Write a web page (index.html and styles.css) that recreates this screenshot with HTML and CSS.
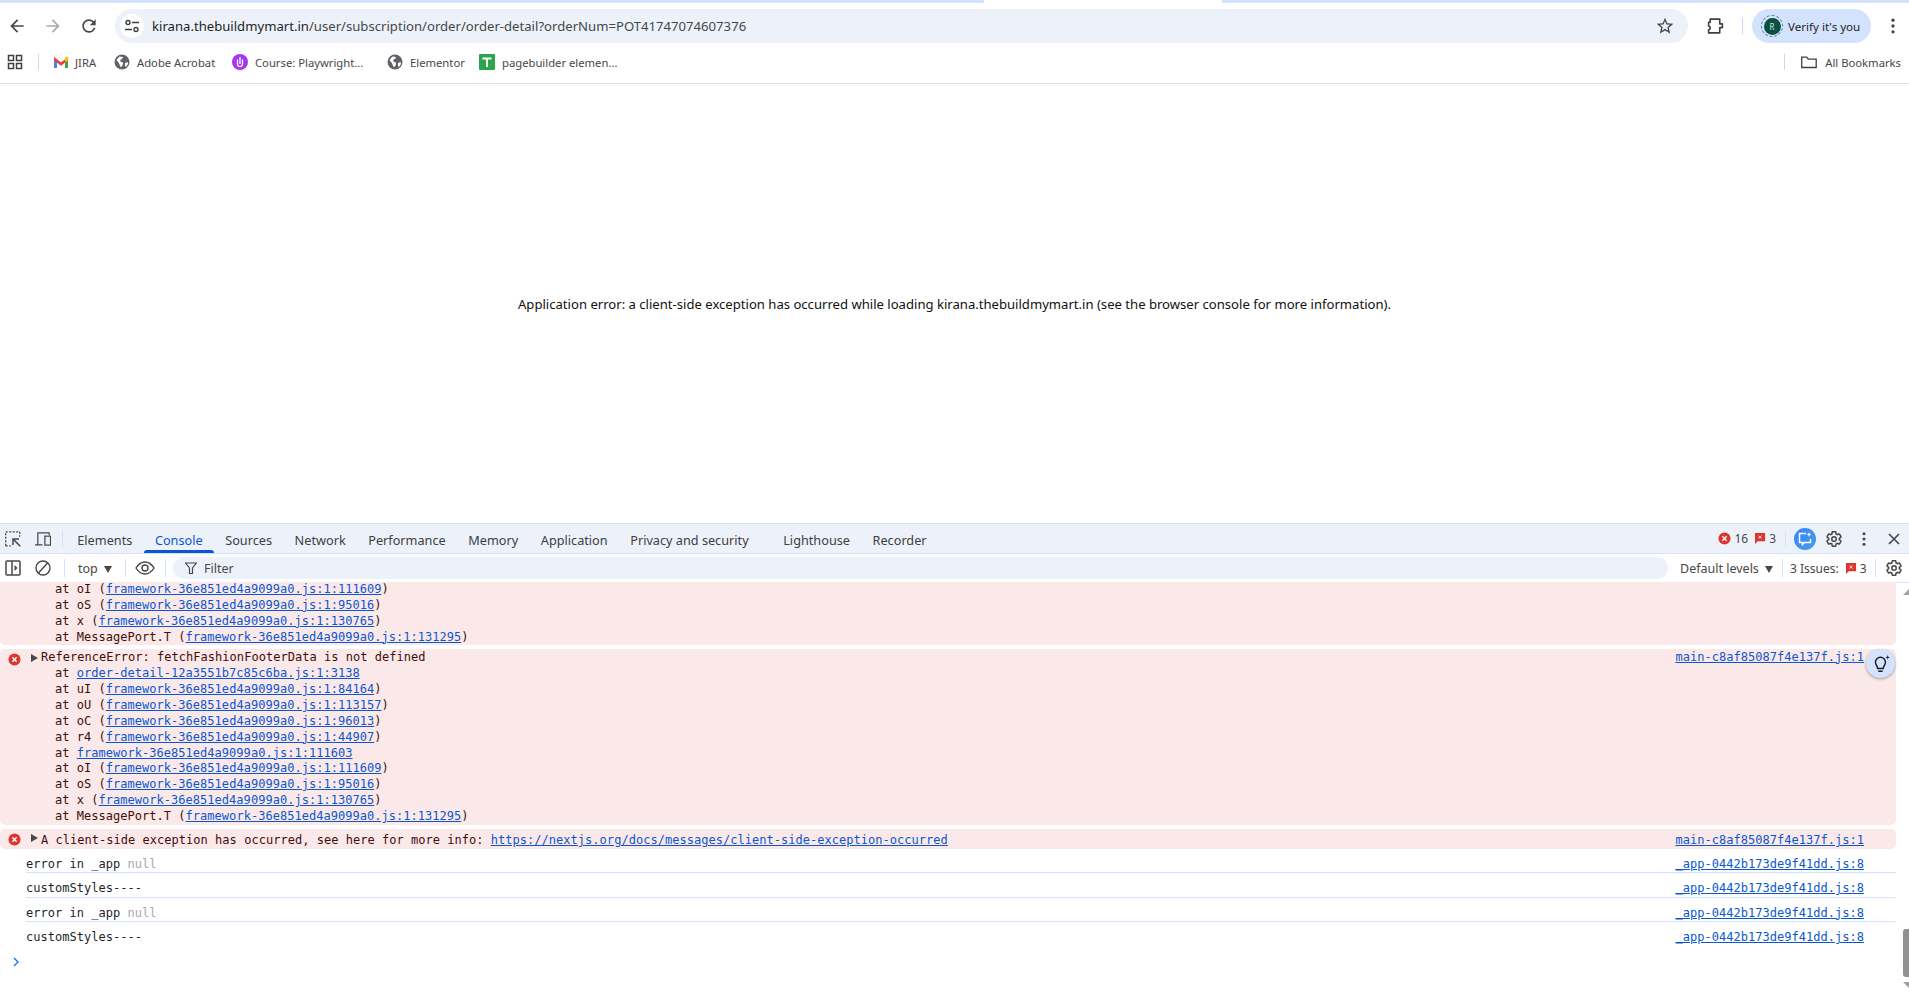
FILE: index.html
```html
<!DOCTYPE html>
<html lang="en">
<head>
    <meta charset="UTF-8">
    <title>kirana.thebuildmymart.in</title>
    <link rel="stylesheet" href="styles.css">
</head>
<body>
<svg class="defs" width="0" height="0">
    <symbol id="i_gear" viewBox="0 0 24 24"><path fill="none" stroke="currentColor" stroke-width="2" d="M19.14 12.94c.04-.3.06-.61.06-.94 0-.32-.02-.64-.07-.94l2.03-1.58c.18-.14.23-.41.12-.61l-1.92-3.32c-.12-.22-.37-.29-.59-.22l-2.39.96c-.5-.38-1.03-.7-1.62-.94l-.36-2.54c-.04-.24-.24-.41-.48-.41h-3.84c-.24 0-.43.17-.47.41l-.36 2.54c-.59.24-1.13.57-1.62.94l-2.39-.96c-.22-.08-.47 0-.59.22L2.74 8.87c-.12.21-.08.47.12.61l2.03 1.58c-.05.3-.09.63-.09.94s.02.64.07.94l-2.03 1.58c-.18.14-.23.41-.12.61l1.92 3.32c.12.22.37.29.59.22l2.39-.96c.5.38 1.03.7 1.62.94l.36 2.54c.05.24.24.41.48.41h3.84c.24 0 .44-.17.47-.41l.36-2.54c.59-.24 1.13-.56 1.62-.94l2.39.96c.22.08.47 0 .59-.22l1.92-3.32c.12-.22.07-.47-.12-.61l-2.01-1.58z"/><circle cx="12" cy="12" r="3" fill="none" stroke="currentColor" stroke-width="2"/></symbol>
    <symbol id="i_kebab" viewBox="0 0 24 24"><circle cx="12" cy="5" r="2" fill="currentColor"/><circle cx="12" cy="12" r="2" fill="currentColor"/><circle cx="12" cy="19" r="2" fill="currentColor"/></symbol>
    <symbol id="i_globe" viewBox="0 0 16 16"><circle cx="8" cy="8" r="7.5" fill="#5f6368"/><path fill="#fff" d="M2.500 6l3-3.500 3.500.5-1 2-2 1 1 2 2 .5v2l-2 3-1.500-3-1-2zM11 9l2.500-1 .5 2-2 3-1-1z"/></symbol>
    <symbol id="i_err" viewBox="0 0 14 14"><circle cx="7" cy="7" r="6.500" fill="#dc362e"/><path d="M4.700 4.700l4.600 4.600M9.300 4.700l-4.600 4.600" stroke="#fff" stroke-width="1.500"/></symbol>
    <symbol id="i_flag" viewBox="0 0 12 12"><path fill="#dc362e" d="M0 0h11v9H3l-3 3z"/><path d="M4 3l3 3M7 3L4 6" stroke="#fff"/></symbol>
</svg>

<div class="strip">
    <div class="strip_tab"></div>
</div>

<div class="toolbar">
    <svg class="ic nav_back" viewBox="0 0 24 24"><path d="M20 11H7.830l5.590-5.590L12 4l-8 8 8 8 1.410-1.410L7.830 13H20v-2z"/></svg>
    <svg class="ic nav_fwd" viewBox="0 0 24 24"><path d="M4 11h12.170l-5.590-5.590L12 4l8 8-8 8-1.410-1.410L16.170 13H4v-2z"/></svg>
    <svg class="ic nav_reload" viewBox="0 0 24 24"><path d="M17.650 6.350A7.958 7.958 0 0012 4c-4.420 0-7.990 3.580-7.990 8s3.570 8 7.990 8c3.730 0 6.840-2.550 7.730-6h-2.080A5.990 5.990 0 0112 18c-3.310 0-6-2.690-6-6s2.690-6 6-6c1.660 0 3.140.690 4.220 1.780L13 11h7V4l-2.350 2.350z"/></svg>
    <div class="omnibox">
        <span class="tune">
            <svg width="16" height="16" viewBox="0 0 16 16" fill="none" stroke="#3c4043" stroke-width="1.400"><circle cx="4" cy="4.500" r="2"/><path d="M8 4.500h7M1 11.500h7"/><circle cx="12" cy="11.500" r="2"/></svg>
        </span>
        <span class="url"><b>kirana.thebuildmymart.in</b>/user/subscription/order/order-detail?orderNum=POT41747074607376</span>
        <svg class="ic_star" viewBox="0 0 24 24"><path d="M22 9.240l-7.190-.620L12 2 9.190 8.630 2 9.240l5.460 4.730L5.820 21 12 17.270 18.180 21l-1.630-7.030L22 9.240zM12 15.400l-3.760 2.270 1-4.280-3.320-2.880 4.380-.380L12 6.100l1.710 4.040 4.380.380-3.320 2.880 1 4.280L12 15.400z"/></svg>
    </div>
    <svg class="ic_ext" viewBox="0 0 16 15" fill="none" stroke="#3c4043" stroke-width="1.500"><path d="M3 1h9v4.500h2.500V9H12v5H1.500v-3c2 0 2-3.500 0-3.500V4H3z" stroke-linejoin="round"/></svg>
    <span class="tb_sep"></span>
    <div class="verify">
        <span class="avatar_ring"><span class="avatar">R</span></span>
        <span>Verify it's you</span>
    </div>
    <svg class="ic_menu"><use href="#i_kebab"/></svg>
</div>

<div class="bookmarks">
    <svg class="bm_apps" viewBox="0 0 16 16" fill="none" stroke="#3c4043" stroke-width="1.500"><rect x="1.500" y="1.500" width="5" height="5"/><rect x="9.500" y="1.500" width="5" height="5"/><rect x="1.500" y="9.500" width="5" height="5"/><rect x="9.500" y="9.500" width="5" height="5"/></svg>
    <span class="bm_sep"></span>
    <div class="bm bm_jira">
        <svg width="14" height="12" viewBox="0 0 14 12"><path fill="#4285f4" d="M0 1.500V12h3V5z"/><path fill="#34a853" d="M14 1.500V12h-3V5z"/><path fill="#ea4335" d="M0 1l7 5.200L14 1v3.500L7 9.700 0 4.500z"/><path fill="#fbbc04" d="M11 1.500l3-1v4l-3 1.800z"/></svg>
        <span>JIRA</span>
    </div>
    <div class="bm bm_adobe"><svg class="bm_globe"><use href="#i_globe"/></svg><span>Adobe Acrobat</span></div>
    <div class="bm bm_course">
        <svg width="16" height="16" viewBox="0 0 16 16"><circle cx="8" cy="8" r="8" fill="#a435f0"/><path d="M5.500 5.500v4.500a2.500 2.500 0 005 0V5.500M8 3v7" fill="none" stroke="#fff" stroke-width="1.300"/></svg>
        <span>Course: Playwright...</span>
    </div>
    <div class="bm bm_elem"><svg class="bm_globe"><use href="#i_globe"/></svg><span>Elementor</span></div>
    <div class="bm bm_page">
        <svg width="16" height="16" viewBox="0 0 16 16"><rect width="16" height="16" rx="1" fill="#2da44e"/><path d="M3.500 4.500h9M8 4.500V13" stroke="#fff" stroke-width="2"/></svg>
        <span>pagebuilder elemen...</span>
    </div>
    <span class="bm_sep bm_sep_right"></span>
    <div class="bm bm_all">
        <svg width="16" height="13" viewBox="0 0 16 13" fill="none" stroke="#3c4043" stroke-width="1.300"><path d="M.700 11.500V1.200h5l1.500 2h8v8.300z"/></svg>
        <span>All Bookmarks</span>
    </div>
</div>

<div class="page">
    <p class="page_error">Application error: a client-side exception has occurred while loading kirana.thebuildmymart.in (see the browser console for more information).</p>
</div>

<div class="devtools">
    <div class="dt_tabs">
        <svg class="dt_ic dt_inspect" viewBox="0 0 16 16" fill="none" stroke="#474747" stroke-width="1.300"><path d="M.700 14.800v-14h14v5" stroke-dasharray="2 1.500"/><path d="M.700 14.800h5" stroke-dasharray="2 1.500"/><path d="M8 14V8h6M8 8l7.300 7.300" stroke-width="1.500"/></svg>
        <svg class="dt_ic dt_device" viewBox="0 0 17 15" fill="none" stroke="#474747" stroke-width="1.300"><path d="M3 13.500V1h12v2.500M0 13.800h8"/><rect x="10.500" y="4.500" width="6" height="9.500"/></svg>
        <span class="dt_sep"></span>
        <span class="tab">Elements</span>
        <span class="tab tab_active">Console</span>
        <span class="tab">Sources</span>
        <span class="tab">Network</span>
        <span class="tab">Performance</span>
        <span class="tab">Memory</span>
        <span class="tab">Application</span>
        <span class="tab">Privacy and security</span>
        <span class="tab tab_wide">Lighthouse</span>
        <span class="tab">Recorder</span>
        <div class="dt_right">
            <svg class="i_err"><use href="#i_err"/></svg>
            <span class="count">16</span>
            <svg class="i_flag"><use href="#i_flag"/></svg>
            <span class="count">3</span>
            <span class="dt_sep dt_sep_r"></span>
            <span class="ai_btn">
                <svg width="14" height="14" viewBox="0 0 14 14" fill="none" stroke="#fff" stroke-width="1.500"><path d="M8 1.500H1.500v9h3v2l2-2h6V7"/><path d="M11 0l.7 1.800L13.500 2.500l-1.800.7L11 5l-.7-1.800-1.800-.7 1.800-.7z" fill="#fff" stroke="none"/></svg>
            </span>
            <svg class="dt_gear"><use href="#i_gear"/></svg>
            <svg class="dt_kebab"><use href="#i_kebab"/></svg>
            <svg class="dt_close" viewBox="0 0 14 14" stroke="#474747" stroke-width="1.600"><path d="M2 2l10 10M12 2L2 12"/></svg>
        </div>
    </div>

    <div class="dt_bar">
        <svg class="dt_ic dt_panel" viewBox="0 0 16 16" fill="none" stroke="#474747" stroke-width="1.500"><rect x="1" y="1" width="14" height="14" rx="1"/><path d="M7 1v14"/><path d="M9.500 5l3 3-3 3z" fill="#474747" stroke="none"/></svg>
        <svg class="dt_ic dt_clear" viewBox="0 0 16 16" fill="none" stroke="#474747" stroke-width="1.400"><circle cx="8" cy="8" r="7"/><path d="M3.500 13L12.500 3"/></svg>
        <span class="dt_sep"></span>
        <span class="ctx">top <i class="tri"></i></span>
        <span class="dt_sep"></span>
        <svg class="dt_eye" viewBox="0 0 20 14" fill="none" stroke="#474747" stroke-width="1.400"><path d="M1 7c2.500-4 5.500-6 9-6s6.500 2 9 6c-2.500 4-5.500 6-9 6S3.500 11 1 7z"/><circle cx="10" cy="7" r="3"/></svg>
        <span class="dt_sep"></span>
        <div class="filter">
            <svg width="12" height="12" viewBox="0 0 12 12" fill="none" stroke="#474747" stroke-width="1.200"><path d="M.5 1h11L7.500 6v5.500h-3V6z"/></svg>
            <span>Filter</span>
        </div>
        <span class="levels">Default levels <i class="tri"></i></span>
        <span class="dt_sep"></span>
        <span class="issues">3 Issues:</span>
        <svg class="i_flag"><use href="#i_flag"/></svg>
        <span class="count">3</span>
        <span class="dt_sep dt_sep_i"></span>
        <svg class="dt_gear"><use href="#i_gear"/></svg>
    </div>

    <div class="console">
        <div class="msgs">
            <div class="msg_err msg_cut">
<div class="line">at oI (<a>framework-36e851ed4a9099a0.js:1:111609</a>)</div>
<div class="line">at oS (<a>framework-36e851ed4a9099a0.js:1:95016</a>)</div>
<div class="line">at x (<a>framework-36e851ed4a9099a0.js:1:130765</a>)</div>
<div class="line">at MessagePort.T (<a>framework-36e851ed4a9099a0.js:1:131295</a>)</div>
            </div>
            <div class="msg_err msg_block">
                <svg class="msg_icon"><use href="#i_err"/></svg>
                <div class="head"><i class="arrow"></i><span>ReferenceError: fetchFashionFooterData is not defined</span><a class="src">main-c8af85087f4e137f.js:1</a></div>
<div class="line">at <a>order-detail-12a3551b7c85c6ba.js:1:3138</a></div>
<div class="line">at uI (<a>framework-36e851ed4a9099a0.js:1:84164</a>)</div>
<div class="line">at oU (<a>framework-36e851ed4a9099a0.js:1:113157</a>)</div>
<div class="line">at oC (<a>framework-36e851ed4a9099a0.js:1:96013</a>)</div>
<div class="line">at r4 (<a>framework-36e851ed4a9099a0.js:1:44907</a>)</div>
<div class="line">at <a>framework-36e851ed4a9099a0.js:1:111603</a></div>
<div class="line">at oI (<a>framework-36e851ed4a9099a0.js:1:111609</a>)</div>
<div class="line">at oS (<a>framework-36e851ed4a9099a0.js:1:95016</a>)</div>
<div class="line">at x (<a>framework-36e851ed4a9099a0.js:1:130765</a>)</div>
<div class="line">at MessagePort.T (<a>framework-36e851ed4a9099a0.js:1:131295</a>)</div>
            </div>
            <div class="msg_err msg_one">
                <svg class="msg_icon"><use href="#i_err"/></svg>
                <div class="head"><i class="arrow"></i><span>A client-side exception has occurred, see here for more info: <a>https://nextjs.org/docs/messages/client-side-exception-occurred</a></span><a class="src">main-c8af85087f4e137f.js:1</a></div>
            </div>
            <div class="log"><span>error in _app <em>null</em></span><a class="src">_app-0442b173de9f41dd.js:8</a></div>
            <div class="log"><span>customStyles----</span><a class="src">_app-0442b173de9f41dd.js:8</a></div>
            <div class="log"><span>error in _app <em>null</em></span><a class="src">_app-0442b173de9f41dd.js:8</a></div>
            <div class="log log_last"><span>customStyles----</span><a class="src">_app-0442b173de9f41dd.js:8</a></div>
            <svg class="prompt" viewBox="0 0 8 10" fill="none" stroke="#1a73e8" stroke-width="1.400"><path d="M2 1l4 4-4 4"/></svg>
            <span class="bulb">
                <svg width="20" height="20" viewBox="0 0 18 18" fill="none" stroke="#1f1f1f" stroke-width="1.300"><path d="M6 13c0-2-2-3-2-5.500a4.500 4.500 0 019 0C13 10 11 11 11 13zM6.500 15.500h4"/><path d="M15 1l.5 1.500L17 3l-1.500.5L15 5l-.5-1.500L13 3l1.500-.5z" fill="#1f1f1f" stroke="none"/></svg>
            </span>
        </div>
        <div class="scrollbar">
            <i class="sb_up"></i>
            <i class="sb_thumb"></i>
            <i class="sb_down"></i>
        </div>
    </div>
</div>
</body>
</html>
```

FILE: styles.css
```css
* {
    box-sizing: border-box;
}

html, body {
    margin: 0;
    height: 100%;
    overflow: hidden;
}

body {
    display: flex;
    flex-direction: column;
    background: #fff;
    font-family: "Noto Sans", "Open Sans", sans-serif;
    color: #1f1f1f;
}

.defs {
    position: absolute;
}

/* browser chrome */
.strip {
    height: 3px;
    flex: none;
    background: #d3e3fd;
    padding-left: 984px;
}

.strip_tab {
    width: 238px;
    height: 3px;
    background: #fff;
}

.toolbar {
    height: 46px;
    flex: none;
    display: flex;
    align-items: center;
}

.ic {
    width: 20px;
    height: 20px;
    fill: #474747;
    flex: none;
}

.nav_back {
    margin-left: 7px;
}

.nav_fwd {
    margin-left: 16px;
    fill: #a8abaf;
}

.nav_reload {
    margin-left: 16px;
}

.omnibox {
    width: 1573px;
    height: 34px;
    margin-left: 16px;
    background: #edf2fa;
    border-radius: 17px;
    display: flex;
    align-items: center;
    padding-left: 5px;
    padding-right: 13px;
}

.tune {
    width: 24px;
    height: 24px;
    border-radius: 50%;
    background: #fff;
    display: flex;
    align-items: center;
    justify-content: center;
}

.url {
    margin-left: 8px;
    flex: 1;
    font-size: 13.130px;
    color: #474747;
    white-space: nowrap;
}

.url b {
    font-weight: normal;
    color: #1f1f1f;
}

.ic_star {
    width: 20px;
    height: 20px;
    fill: #474747;
}

.ic_ext {
    width: 17px;
    height: 16px;
    margin-left: 19px;
    margin-right: 1px;
    flex: none;
}

.tb_sep {
    width: 1px;
    height: 16px;
    margin-left: 17px;
    background: #c7d7f5;
    flex: none;
}

.verify {
    width: 119px;
    height: 34px;
    margin-left: 9px;
    border-radius: 17px;
    background: #d3e3fd;
    display: flex;
    align-items: center;
    padding-left: 9px;
    font-size: 11.600px;
    flex: none;
}

.avatar_ring {
    width: 22px;
    height: 22px;
    border: 1px dashed #5a7fb8;
    border-radius: 50%;
    display: flex;
    align-items: center;
    justify-content: center;
    margin-right: 5px;
}

.avatar {
    width: 17px;
    height: 17px;
    border-radius: 50%;
    background: #0b4f3c;
    color: #d3e3fd;
    font-size: 8px;
    text-align: center;
    line-height: 17px;
}

.ic_menu {
    width: 20px;
    height: 20px;
    margin-left: 12px;
    color: #474747;
    flex: none;
}

.bookmarks {
    height: 35px;
    flex: none;
    display: flex;
    align-items: center;
    padding-bottom: 8px;
    font-size: 11.250px;
    color: #474747;
    border-bottom: 1px solid #e0e0e0;
}

.bm_apps {
    width: 16px;
    height: 16px;
    margin-left: 7px;
    flex: none;
}

.bm_sep {
    width: 1px;
    height: 16px;
    margin-left: 15px;
    background: #c7d7f5;
    flex: none;
}

.bm {
    display: flex;
    align-items: center;
    gap: 7px;
    white-space: nowrap;
}

.bm_globe {
    width: 16px;
    height: 16px;
}

.bm_jira {
    margin-left: 15px;
    width: 60px;
}

.bm_adobe {
    width: 118px;
}

.bm_course {
    width: 155px;
}

.bm_elem {
    width: 92px;
}

.bm_sep_right {
    margin-left: auto;
}

.bm_all {
    margin-left: 16px;
    margin-right: 8px;
    gap: 8px;
}

.page {
    flex: 1;
    display: flex;
    align-items: center;
    justify-content: center;
}

.page_error {
    margin: 0;
    font-size: 13.100px;
    color: #111;
}

/* devtools */
.devtools {
    height: 471px;
    flex: none;
    display: flex;
    flex-direction: column;
    font-size: 12.500px;
    color: #474747;
}

.dt_tabs {
    height: 31px;
    flex: none;
    display: flex;
    align-items: center;
    background: #edf2fa;
    border-top: 1px solid #d3e3fd;
    border-bottom: 1px solid #d3e3fd;
}

.dt_bar {
    height: 29px;
    flex: none;
    display: flex;
    align-items: center;
    border-bottom: 1px solid #d3e3fd;
}

.dt_ic {
    width: 16px;
    height: 16px;
    flex: none;
}

.dt_inspect {
    margin-left: 5px;
}

.dt_device {
    margin-left: 14px;
}

.dt_sep {
    width: 1px;
    height: 18px;
    background: #d3e3fd;
    flex: none;
}

.dt_tabs > .dt_sep {
    margin-left: 11px;
    margin-right: 3px;
}

.tab {
    height: 29px;
    line-height: 32px;
    padding: 0 11.300px;
    white-space: nowrap;
    font-size: 12.700px;
    color: #3c4043;
}

.tab_active {
    color: #0b57d0;
    position: relative;
}

.tab_active::after {
    content: "";
    position: absolute;
    left: 0;
    right: 0;
    bottom: 0;
    height: 3px;
    border-radius: 3px 3px 0 0;
    background: #0b57d0;
}

.tab_wide {
    margin-left: 12px;
}

.dt_right {
    margin-left: auto;
    display: flex;
    align-items: center;
}

.i_err {
    width: 13px;
    height: 13px;
}

.i_flag {
    width: 11px;
    height: 11px;
    flex: none;
}

.count {
    margin-left: 3px;
    margin-right: 7px;
    font-size: 12px;
}

.dt_sep_r {
    margin-left: 2px;
    margin-right: 8px;
    height: 16px;
}

.ai_btn {
    width: 22px;
    height: 22px;
    border-radius: 50%;
    background: linear-gradient(135deg, #3186ff, #4a9be8);
    display: flex;
    align-items: center;
    justify-content: center;
}

.dt_gear {
    width: 18px;
    height: 18px;
    margin-left: 9px;
    color: #474747;
    flex: none;
}

.dt_kebab {
    width: 18px;
    height: 18px;
    margin-left: 12px;
    color: #474747;
}

.dt_close {
    width: 14px;
    height: 14px;
    margin-left: 14px;
    margin-right: 8px;
}

.dt_panel {
    margin-left: 5px;
}

.dt_clear {
    margin-left: 14px;
}

.dt_bar > .dt_sep {
    margin-left: 13px;
}

.ctx {
    width: 34px;
    margin-left: 13px;
    white-space: nowrap;
}

.tri {
    display: inline-block;
    width: 0;
    height: 0;
    margin-left: 3px;
    border-left: 4px solid transparent;
    border-right: 4px solid transparent;
    border-top: 7px solid #474747;
}

.dt_eye {
    width: 20px;
    height: 14px;
    margin-left: 9px;
    flex: none;
}

.dt_bar > .dt_eye + .dt_sep {
    margin-left: 10px;
}

.filter {
    margin-left: 7px;
    width: 1495px;
    height: 22px;
    background: #edf2fa;
    border-radius: 11px;
    display: flex;
    align-items: center;
    gap: 7px;
    padding-left: 12px;
}

.levels {
    margin-left: 12px;
    width: 89px;
    white-space: nowrap;
}

.dt_bar > .levels + .dt_sep {
    margin-left: 13px;
}

.issues {
    margin-left: 7px;
    margin-right: 7px;
    font-size: 12px;
    white-space: nowrap;
}

.dt_bar > .dt_sep_i {
    margin-left: 1px;
}

.console {
    flex: 1;
    display: flex;
    min-height: 0;
    font-family: "DejaVu Sans Mono", "Liberation Mono", monospace;
    font-size: 12px;
    letter-spacing: .03px;
    color: #1f1f1f;
}

.msgs {
    flex: 1;
    min-width: 0;
    position: relative;
}

.msg_err {
    position: relative;
    background: #fbe9e9;
    border-radius: 0 0 5px 5px;
    color: #410e0b;
    margin-bottom: 4px;
}

.msg_block, .msg_one {
    border-radius: 5px;
}

.msg_cut {
    height: 63px;
    padding-top: 0;
    border-radius: 0 0 5px 5px;
}

.msg_cut .line:first-child {
    margin-top: -1px;
}

.msg_block {
    height: 176px;
    padding-top: .5px;
}

.msg_block .head {
    margin-bottom: 1px;
}

.msg_one {
    height: 20px;
    margin-bottom: 0;
    padding-top: 4px;
}

.line {
    height: 15.850px;
    line-height: 15.850px;
    padding-left: 55px;
    white-space: pre;
}

.head {
    height: 15.800px;
    line-height: 15.800px;
    display: flex;
    padding-left: 41px;
    padding-right: 32px;
    white-space: pre;
}

.msg_icon {
    position: absolute;
    left: 8px;
    top: 4px;
    width: 13px;
    height: 13px;
}

.arrow {
    position: absolute;
    left: 31px;
    top: 5px;
    width: 0;
    height: 0;
    border-top: 4px solid transparent;
    border-bottom: 4px solid transparent;
    border-left: 7px solid #474747;
}

a {
    color: #0b57d0;
    text-decoration: underline;
}

.src {
    margin-left: auto;
}

.log {
    height: 24.400px;
    margin-left: 26px;
    padding-right: 32px;
    padding-top: 7px;
    line-height: 16px;
    display: flex;
    white-space: pre;
    border-bottom: 1px solid #d3e3fd;
}

.log_last {
    border-bottom: none;
}

.log em {
    font-style: normal;
    color: #a8a8a8;
}

.prompt {
    display: block;
    width: 8px;
    height: 10px;
    margin-left: 12px;
    margin-top: 10px;
}

.bulb {
    position: absolute;
    right: 1px;
    top: 66px;
    width: 29px;
    height: 29px;
    border-radius: 50%;
    background: #d3e3fd;
    box-shadow: 0 1px 3px rgba(0, 0, 0, .35);
    display: flex;
    align-items: center;
    justify-content: center;
}

.scrollbar {
    width: 13px;
    flex: none;
    display: flex;
    flex-direction: column;
    align-items: flex-end;
    padding-top: 6px;
}

.sb_up {
    width: 0;
    height: 0;
    border-left: 6px solid transparent;
    border-bottom: 6px solid #a0a0a0;
}

.sb_thumb {
    width: 6px;
    height: 48px;
    margin-top: auto;
    background: #909090;
    border-radius: 3px 0 0 3px;
}

.sb_down {
    width: 0;
    height: 0;
    margin-top: 5px;
    margin-bottom: 6px;
    border-left: 6px solid transparent;
    border-top: 6px solid #a0a0a0;
}
```
